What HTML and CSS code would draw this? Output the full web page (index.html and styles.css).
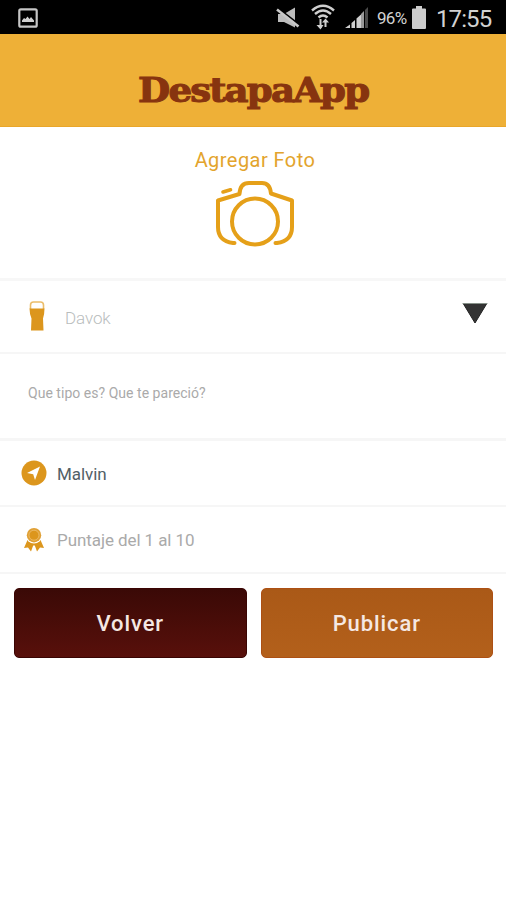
FILE: index.html
```html
<!DOCTYPE html>
<html lang="es">
<head>
<meta charset="utf-8">
<title>DestapaApp</title>
<link rel="stylesheet" href="styles.css">
</head>
<body>
<div class="status">
  <svg class="picture" width="20" height="20" viewBox="0 0 20 20"><rect x="1.300" y="1.300" width="17.400" height="17.400" rx="1.500" fill="none" stroke="#c6c6c6" stroke-width="2.200"/><path d="M4 14v-1.500l2-2.500 1.500 1 2-2.500 2 2.500 1.500-2 3 3.500V14z" fill="#d0d0d0"/></svg>
  <div class="indicators">
    <svg class="mute" width="24" height="22" viewBox="0 0 24 22"><path d="M2 7h6l11-6.500v20L8 15H2z" fill="#bcbcbc"/><path d="M1 .5l22 17" stroke="#000" stroke-width="2"/><path d="M1 2.500L22.500 19.500" stroke="#c8c8c8" stroke-width="2.600"/></svg>
    <svg class="wifi" width="24" height="26" viewBox="0 0 24 26"><g fill="none" stroke="#cfcfcf" stroke-width="2.400"><path d="M1 6.500Q12-3 23 6.500M4 10Q12 3 20 10M7.500 13.500Q12 9.500 16.500 13.500"/><path d="M9.500 15v9M14.500 16v7" stroke-width="2"/></g><path d="M5.500 21h7l-3 4.500zM11 18.500l3.500-4 3.500 4z" fill="#cfcfcf"/></svg>
    <svg class="signal" width="24" height="22" viewBox="0 0 24 22"><path d="M0 22l5-3.500V22z M6.500 17l3.500-3v8H6.500z M11.500 12.500L16 8.500V22h-4.500z" fill="#cfcfcf"/><path d="M16 8l3-3v17h-3z" fill="#999"/><path d="M20 4l3-3v21h-3z" fill="#4a4a4a"/></svg>
    <span class="percent">96%</span>
    <svg class="battery" width="14" height="23" viewBox="0 0 14 23"><path d="M4 0h6v2.500h3q1 0 1 1V22q0 1-1 1H1q-1 0-1-1V3.500q0-1 1-1h3z" fill="#ccc"/></svg>
    <span class="clock">17:55</span>
  </div>
</div>
<header class="header"><h1 class="brand">DestapaApp</h1></header>
<main>
  <section class="photo">
    <span class="photo-label">Agregar Foto</span>
    <svg class="camera" width="80" height="66" viewBox="0 0 80 66"><g fill="none" stroke="#e5a019" stroke-width="4" stroke-linecap="round" stroke-linejoin="round"><circle cx="40" cy="40.500" r="23"/><path d="M19.500 62h-1.500Q3 60 3 46V19.500L24.500 13Q25 2 34 2h13q8 0 9 10.500L77 19.500V46q0 14-15 16h-1.500"/><path d="M8 11L15.500 8.800" stroke-width="3.600"/></g></svg>
  </section>
  <section class="row beer-row">
    <svg class="beer" width="17" height="30" viewBox="0 0 17 30"><path d="M1.500 8L1.500 4q0-3 3-3h7q3 0 3 3v4" fill="#fff" stroke="#ebbd6a" stroke-width="1.600"/><path d="M.5 7.500h15q0 5-1.500 10l.5 12H2L2.500 17.500Q.5 12.500 .5 7.500z" fill="#dc961d"/></svg>
    <span class="beer-name">Davok</span>
    <svg class="arrow" width="26" height="21" viewBox="0 0 26 21"><path d="M1.500 1h23L13 20z" fill="#333"/><path d="M24.500 1L13 20 1.500 1" fill="none" stroke="#222" stroke-width="1"/><path d="M.5.5h25" stroke="#879189"/></svg>
  </section>
  <section class="row review"><span>Que tipo es? Que te pareció?</span></section>
  <section class="row place">
    <svg class="pin" width="26" height="26" viewBox="0 0 26 26"><circle cx="13" cy="13" r="12.500" fill="#dc961d"/><path d="M19 6.500L6 13l6.200 1.200L14 20z" fill="#fff"/></svg>
    <span class="place-name">Malvin</span>
  </section>
  <section class="row score">
    <svg class="medal" width="22" height="26" viewBox="0 0 22 26"><path d="M4.500 13L1 21l4-.5L8 24.500l2.200-6h1.600l2.200 6 3-4 4 .5-3.500-8z" fill="#dc961d"/><circle cx="11" cy="8.500" r="8" fill="#fff"/><circle cx="11" cy="8.200" r="7.200" fill="#e0a035"/><circle cx="11" cy="8.200" r="5" fill="#dc961d" stroke="#edbf72" stroke-width=".8"/></svg>
    <span class="score-label">Puntaje del 1 al 10</span>
  </section>
  <div class="actions"><button class="button back">Volver</button><button class="button publish">Publicar</button></div>
</main>
</body>
</html>
```
FILE: styles.css
```css
* { box-sizing: border-box; }
body { margin: 0; width: 506px; height: 900px; overflow: hidden; background: #fff; font-family: Roboto, "Liberation Sans", sans-serif; }
svg { display: block; flex: none; }
.status { height: 34px; padding: 0 14px 0 18px; display: flex; align-items: center; justify-content: space-between; background: #000; color: #d2d2d2; }
.picture { margin-top: 1px; }
.indicators { display: flex; align-items: center; }
.mute { margin-top: 2px; }
.wifi { margin-left: 11px; }
.signal { margin-left: 10px; }
.percent { margin: 2px 0 0 8px; width: 31px; font-size: 17px; letter-spacing: -.7px; }
.battery { margin-left: 4px; }
.clock { margin: 3px 0 0 10px; width: 56px; font-size: 24px; letter-spacing: -.9px; line-height: 28px; }
.header { height: 93px; padding-top: 36px; display: flex; justify-content: center; align-items: flex-start; background: #eeb037; border-bottom: 1px solid #e9a62a; }
.brand { margin: 0; font: bold 33.5px/42px "DejaVu Serif", serif; letter-spacing: -1.6px; color: #87340f; -webkit-text-stroke: 1.1px #87340f; transform: scaleX(1.105); }
.photo { height: 154px; padding-top: 20px; display: flex; flex-direction: column; align-items: center; border-bottom: 3px solid #f7f7f7; }
.photo-label { margin-left: 4px; font-size: 20px; line-height: 26px; letter-spacing: .45px; color: #e3a42d; }
.camera { margin: 8px 0 0 4px; }
.row { display: flex; align-items: center; border-bottom: 2px solid #f6f6f6; }
.beer-row { height: 73px; padding: 0 18px 0 29px; }
.beer { margin-top: -2px; }
.beer-name { margin: 3px auto 0 19px; font-size: 17px; font-weight: 300; letter-spacing: -.1px; color: #b9bdbd; }
.arrow { margin-bottom: 7px; }
.review { height: 87px; padding: 0 28px 7px; border-width: 3px; font-size: 14px; letter-spacing: .03px; color: #aaa; }
.place { height: 66px; padding-left: 21px; }
.place-name, .score-label { margin-left: 10px; font-size: 17px; letter-spacing: -.08px; color: #526067; }
.place-name { margin-top: 2px; }
.score { height: 67px; padding-left: 23px; }
.score-label { margin-left: 12px; color: #aaa; }
.actions { padding: 14px 13px 0 14px; display: grid; grid-template-columns: 1fr 1fr; gap: 14px; }
.button { height: 70px; padding: 2px 0 0; border: 1px solid; border-radius: 5px; color: #f5e8e3; font: 500 22px/26px Roboto, sans-serif; letter-spacing: .9px; }
.back { border-color: #3a0503; background: linear-gradient(#3a0906, #58100b); }
.publish { border-color: #ad5014; background: linear-gradient(#aa5917, #b3601b); }
```
